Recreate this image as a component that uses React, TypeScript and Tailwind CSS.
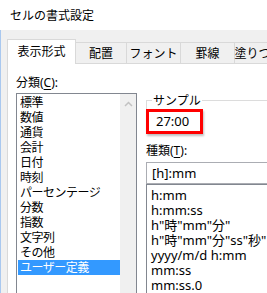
const categories = [
  "標準",
  "数値",
  "通貨",
  "会計",
  "日付",
  "時刻",
  "パーセンテージ",
  "分数",
  "指数",
  "文字列",
  "その他",
  "ユーザー定義",
];

const formats = [
  "h:mm",
  "h:mm:ss",
  'h"時"mm"分"',
  'h"時"mm"分"ss"秒"',
  "yyyy/m/d h:mm",
  "mm:ss",
  "mm:ss.0",
];

const inactiveTabs = [
  { label: "配置", w: "w-[51px]" },
  { label: "フォント", w: "w-[54px]" },
  { label: "罫線", w: "w-[54px]" },
  { label: "塗りつぶし", w: "w-[60px]" },
];

export default function App() {
  return (
    <div className="w-[267px] h-[293px] overflow-hidden bg-white text-[12px] leading-[15px] text-black font-['Noto_Sans','Noto_Sans_CJK_JP',sans-serif]">
      {/* title bar */}
      <div className="h-[30px] flex items-center pl-[10px] bg-white">セルの書式設定</div>

      <div className="h-[263px] bg-[#f0f0f0] border-l border-[#a9c8ef] pl-[6px] flex flex-col">
        {/* tabs */}
        <div className="flex items-end pt-[9px] whitespace-nowrap">
          <div className="relative z-10 -mb-px h-[25px] w-[69px] shrink-0 bg-white border border-b-0 border-[#d9d9d9] flex items-center justify-center pb-[2px]">
            表示形式
          </div>
          {inactiveTabs.map((t) => (
            <div
              key={t.label}
              className={`${t.w} h-[21px] shrink-0 bg-[#f0f0f0] border-t border-r border-[#d9d9d9] flex items-center justify-center`}
            >
              {t.label}
            </div>
          ))}
        </div>

        {/* panel */}
        <div className="flex-1 bg-white border-t border-l border-[#d9d9d9] pl-[8px] pt-[11px] flex gap-[9px] overflow-hidden">
          {/* left column */}
          <div className="w-[121px] shrink-0 flex flex-col">
            <div>
              分類(<span className="underline underline-offset-2">C</span>):
            </div>
            <div className="mt-[3px] flex-1 border border-b-0 border-[#828790] flex">
              <div className="w-[102px] ml-px pt-px tracking-[-0.5px]">
                {categories.map((c, i) => (
                  <div
                    key={c}
                    className={`h-[15px] pl-[2px] whitespace-nowrap ${
                      i === categories.length - 1 ? "bg-[#3399ff] text-white" : ""
                    }`}
                  >
                    {c}
                  </div>
                ))}
              </div>
              <div className="w-[16px] bg-[#f0f0f0] flex justify-center pt-[7px]">
                <svg width="9" height="6" viewBox="0 0 9 6">
                  <polyline points="1,5 4.5,1.5 8,5" fill="none" stroke="#c2c2c2" strokeWidth="1.5" />
                </svg>
              </div>
            </div>
          </div>

          {/* right column */}
          <div className="w-[200px] shrink-0 flex flex-col pt-[25px]">
            <div className="relative border-t border-l border-[#dcdcdc] pt-[8px]">
              <span className="absolute -top-[8px] left-[5px] bg-white px-[1px]">サンプル</span>
              <div className="-ml-px w-[57px] h-[25px] border-[3px] border-[#ff0000] shadow-[1px_2px_2px_rgba(0,0,0,0.25)] flex items-center pl-[7px] text-[13px]">
                27:00
              </div>
            </div>
            <div className="mt-[9px]">
              種類(<span className="underline underline-offset-2">T</span>):
            </div>
            <div className="mt-[4px] h-[22px] border border-[#abadb3] flex items-center pl-[5px] text-[13px]">[h]:mm</div>
            <div className="flex-1 border border-b-0 border-[#828790] pt-[3px] pl-[4px] text-[13px]">
              {formats.map((f) => (
                <div key={f} className="h-[15px] whitespace-nowrap">
                  {f}
                </div>
              ))}
            </div>
          </div>
        </div>
      </div>
    </div>
  );
}
